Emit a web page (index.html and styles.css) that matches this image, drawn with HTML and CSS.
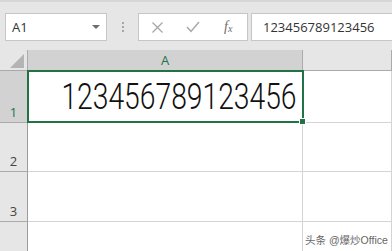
FILE: index.html
```html
<!DOCTYPE html>
<html lang="zh">
<head>
    <meta charset="UTF-8">
    <title>Excel</title>
    <link rel="stylesheet" href="styles.css">
</head>
<body>
    <div class="toolbar">
        <div class="name-box">
            <span>A1</span>
            <i class="caret"></i>
        </div>
        <div class="grip"><b></b><b></b><b></b></div>
        <div class="func-box">
            <svg class="btn" width="11" height="11" viewBox="0 0 11 11"><path d="M0.5 0.5 L10.5 10.5 M10.5 0.5 L0.5 10.5" stroke="#a6a6a6" stroke-width="1.3" fill="none"/></svg>
            <svg class="btn" width="14" height="12" viewBox="0 0 14 12"><path d="M1 6 L5 10.5 L13 1" stroke="#a6a6a6" stroke-width="1.4" fill="none"/></svg>
            <span class="fx">f<sub>x</sub></span>
        </div>
        <div class="formula">123456789123456</div>
    </div>

    <div class="sheet">
        <div class="corner"><i class="tri"></i></div>
        <div class="col-head active">A</div>
        <div class="col-head"></div>

        <div class="row-head active">1</div>
        <div class="cell selected"><span>123456789123456</span></div>
        <div class="cell"></div>

        <div class="row-head">2</div>
        <div class="cell"></div>
        <div class="cell"></div>

        <div class="row-head">3</div>
        <div class="cell"></div>
        <div class="cell"></div>

        <div class="row-head"></div>
        <div class="cell"></div>
        <div class="cell"></div>
    </div>

    <div class="watermark">头条 @爆炒Office</div>
</body>
</html>
```

FILE: styles.css
```css
body {
    margin: 0;
    width: 392px;
    height: 251px;
    overflow: hidden;
    font-family: 'Open Sans', 'Noto Sans CJK SC', sans-serif;
    background-color: #ffffff;
    position: relative;
}

.toolbar {
    height: 50px;
    background-color: #e6e6e6;
    border-top: 2px solid #d6d6d6;
    display: flex;
    align-items: flex-start;
    box-sizing: border-box;
}

.name-box {
    margin: 11px 0 0 5px;
    width: 102px;
    height: 28px;
    box-sizing: border-box;
    background-color: #fff;
    border: 1px solid #c6c6c6;
    display: flex;
    align-items: center;
    justify-content: space-between;
    padding: 0 6px 0 6px;
    font-size: 13px;
    color: #333;
}

.caret {
    width: 0;
    height: 0;
    border-left: 4px solid transparent;
    border-right: 4px solid transparent;
    border-top: 4px solid #6d6d6d;
}

.grip {
    width: 2px;
    margin: 20px 14px 0 15px;
    display: flex;
    flex-direction: column;
    gap: 2px;
}

.grip b {
    width: 2px;
    height: 2px;
    background-color: #a6a6a6;
}

.func-box {
    margin-top: 11px;
    width: 110px;
    height: 28px;
    box-sizing: border-box;
    background-color: #fff;
    border: 1px solid #c6c6c6;
    display: flex;
    align-items: center;
    padding-left: 13px;
    gap: 23px;
}

.fx {
    font-family: 'Liberation Serif', serif;
    font-style: italic;
    font-size: 14px;
    color: #6d6d6d;
    margin-left: 1px;
}

.fx sub {
    font-size: 10px;
    vertical-align: -1px;
}

.formula {
    margin: 11px 0 0 3px;
    flex: 1;
    height: 28px;
    box-sizing: border-box;
    background-color: #fff;
    border: 1px solid #c6c6c6;
    border-right: none;
    padding-left: 11px;
    line-height: 26px;
    font-size: 13px;
    color: #333;
}

.sheet {
    display: grid;
    grid-template-columns: 28px 275px 1fr;
    grid-template-rows: 21px 52px 49px 50px 40px;
    position: relative;
}

.corner {
    background-color: #e6e6e6;
    border-right: 1px solid #ababab;
    border-bottom: 1px solid #ababab;
    position: relative;
}

.tri {
    position: absolute;
    right: 3px;
    bottom: 2px;
    width: 0;
    height: 0;
    border-left: 14px solid transparent;
    border-bottom: 14px solid #b4b4b4;
}

.col-head {
    background-color: #e6e6e6;
    border-bottom: 1px solid #ababab;
    border-right: 1px solid #ababab;
    text-align: center;
    font-size: 13px;
    line-height: 20px;
    color: #444;
}

.col-head.active {
    background-color: #d2d2d2;
    color: #217346;
}

.row-head {
    background-color: #e6e6e6;
    border-right: 1px solid #9b9b9b;
    border-bottom: 1px solid #ababab;
    font-size: 13px;
    line-height: 16px;
    color: #444;
    display: flex;
    align-items: flex-end;
    justify-content: center;
    padding-bottom: 2px;
}

.row-head.active {
    background-color: #d2d2d2;
    color: #217346;
}

.cell {
    border-right: 1px solid #d4d4d4;
    border-bottom: 1px solid #d4d4d4;
}

.cell.selected {
    position: relative;
    display: flex;
    align-items: center;
    justify-content: flex-end;
    padding-right: 5px;
    font-family: Roboto, sans-serif;
    font-size: 36px;
    font-weight: 300;
    color: #111;
}

.cell.selected span {
    display: inline-block;
    transform: scaleX(0.785);
    transform-origin: right center;
    white-space: nowrap;
}

.cell.selected::after {
    content: "";
    position: absolute;
    top: -1px;
    left: -1px;
    right: -2px;
    bottom: -1px;
    border: 2px solid #217346;
}

.cell.selected::before {
    content: "";
    position: absolute;
    right: -4px;
    bottom: -3px;
    width: 5px;
    height: 5px;
    background-color: #217346;
    border: 1px solid #fff;
    z-index: 1;
}

.watermark {
    position: absolute;
    left: 305px;
    top: 233px;
    white-space: nowrap;
    font-family: 'Liberation Sans', 'Noto Sans CJK SC', sans-serif;
    font-size: 10.5px;
    line-height: 14px;
    color: #666;
}
```
